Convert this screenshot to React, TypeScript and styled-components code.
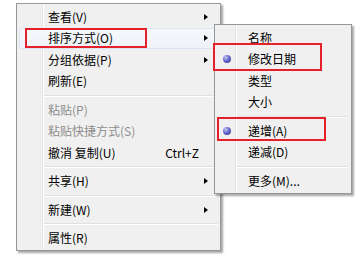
import React from "react";
import styled, { createGlobalStyle } from "styled-components";

const Global = createGlobalStyle`
  html, body { margin: 0; padding: 0; background: #ffffff; }
  body { font-family: "Noto Sans CJK SC", "Microsoft YaHei", sans-serif; }
`;

const Page = styled.div`
  position: relative;
  width: 355px;
  height: 267px;
  padding: 3px 0 0 16px;
  box-sizing: border-box;
  overflow: hidden;
`;

const Menu = styled.div<{ $width: number; $gutter: number }>`
  width: ${(p) => p.$width}px;
  box-sizing: border-box;
  border: 1px solid #979797;
  padding: 2px 2px 1px 2px;
  display: flex;
  flex-direction: column;
  background:
    linear-gradient(
      to right,
      transparent ${(p) => p.$gutter}px,
      #e2e3e3 ${(p) => p.$gutter}px,
      #e2e3e3 ${(p) => p.$gutter + 1}px,
      #ffffff ${(p) => p.$gutter + 1}px,
      #ffffff ${(p) => p.$gutter + 2}px,
      transparent ${(p) => p.$gutter + 2}px
    ),
    #f0f0f0;
  box-shadow: 2px 2px 2px rgba(0, 0, 0, 0.35);
`;

const SubMenu = styled(Menu)`
  position: absolute;
  left: 214px;
  top: 24px;
  padding: 2px 2px 1px 2px;
`;

const Item = styled.div<{ $disabled?: boolean; $hover?: boolean; $lead: number }>`
  display: flex;
  align-items: center;
  height: 21.5px;
  box-sizing: border-box;
  padding-left: ${(p) => p.$lead}px;
  padding-right: 9px;
  font-size: 12px;
  line-height: 14px;
  white-space: nowrap;
  color: ${(p) => (p.$disabled ? "#8d8d8d" : "#000000")};
  border: 1px solid ${(p) => (p.$hover ? "#dbe5f1" : "transparent")};
  border-radius: 3px;
  background: ${(p) =>
    p.$hover ? "linear-gradient(#f6f8fb, #eef2f8)" : "transparent"};
`;

const Label = styled.span`
  flex: 1;
`;

const Shortcut = styled.span`
  margin-right: 9px;
`;

const Arrow = styled.span`
  width: 0;
  height: 0;
  border-top: 3.5px solid transparent;
  border-bottom: 3.5px solid transparent;
  border-left: 4px solid #000;
  margin-right: 0px;
`;

const Separator = styled.div<{ $start: number }>`
  height: 7px;
  display: flex;
  align-items: center;
  padding-left: ${(p) => p.$start}px;
  &::before {
    content: "";
    flex: 1;
    height: 1px;
    background: #e0e0e0;
    border-bottom: 1px solid #ffffff;
  }
`;

const RadioSlot = styled.span`
  width: 31px;
  margin-left: -31px;
  display: flex;
  align-items: center;
  padding-left: 6px;
  box-sizing: border-box;
`;

const Dot = styled.span`
  width: 8px;
  height: 8px;
  border-radius: 50%;
  background: radial-gradient(circle at 35% 30%, #c8c8f4 0%, #6a6ad0 45%, #2a2a86 100%);
`;

const Mark = styled.div<{ $l: number; $t: number; $w: number; $h: number }>`
  position: absolute;
  left: ${(p) => p.$l}px;
  top: ${(p) => p.$t}px;
  width: ${(p) => p.$w}px;
  height: ${(p) => p.$h}px;
  box-sizing: border-box;
  border: 2px solid #e4212b;
  pointer-events: none;
`;

type Entry =
  | { sep: true }
  | {
      sep?: false;
      label: string;
      sub?: boolean;
      disabled?: boolean;
      shortcut?: string;
      hover?: boolean;
      checked?: boolean;
    };

const mainItems: Entry[] = [
  { label: "查看(V)", sub: true },
  { label: "排序方式(O)", sub: true, hover: true },
  { label: "分组依据(P)", sub: true },
  { label: "刷新(E)" },
  { sep: true },
  { label: "粘贴(P)", disabled: true },
  { label: "粘贴快捷方式(S)", disabled: true },
  { label: "撤消 复制(U)", shortcut: "Ctrl+Z" },
  { sep: true },
  { label: "共享(H)", sub: true },
  { sep: true },
  { label: "新建(W)", sub: true },
  { sep: true },
  { label: "属性(R)" },
];

const subItems: Entry[] = [
  { label: "名称" },
  { label: "修改日期", checked: true },
  { label: "类型" },
  { label: "大小" },
  { sep: true },
  { label: "递增(A)", checked: true },
  { label: "递减(D)" },
  { sep: true },
  { label: "更多(M)..." },
];

function renderItems(items: Entry[], lead: number, sepStart: number) {
  return items.map((it, i) =>
    it.sep ? (
      <Separator key={i} $start={sepStart} />
    ) : (
      <Item key={i} $lead={lead} $disabled={it.disabled} $hover={it.hover}>
        {it.checked !== undefined && (
          <RadioSlot>{it.checked ? <Dot /> : null}</RadioSlot>
        )}
        <Label>{it.label}</Label>
        {it.shortcut && <Shortcut>{it.shortcut}</Shortcut>}
        {it.sub && <Arrow />}
      </Item>
    )
  );
}

export default function App() {
  return (
    <>
      <Global />
      <Page>
        <Menu $width={205} $gutter={25}>
          {renderItems(mainItems, 28, 25)}
        </Menu>
        <SubMenu $width={138} $gutter={20}>
          {renderItems(subItems.map((s) => (s.sep ? s : { ...s, checked: s.checked ?? false })), 30, 20)}
        </SubMenu>
        <Mark $l={25} $t={28} $w={122} $h={20} />
        <Mark $l={213} $t={43} $w={109} $h={28} />
        <Mark $l={217} $t={117} $w={109} $h={24} />
      </Page>
    </>
  );
}
